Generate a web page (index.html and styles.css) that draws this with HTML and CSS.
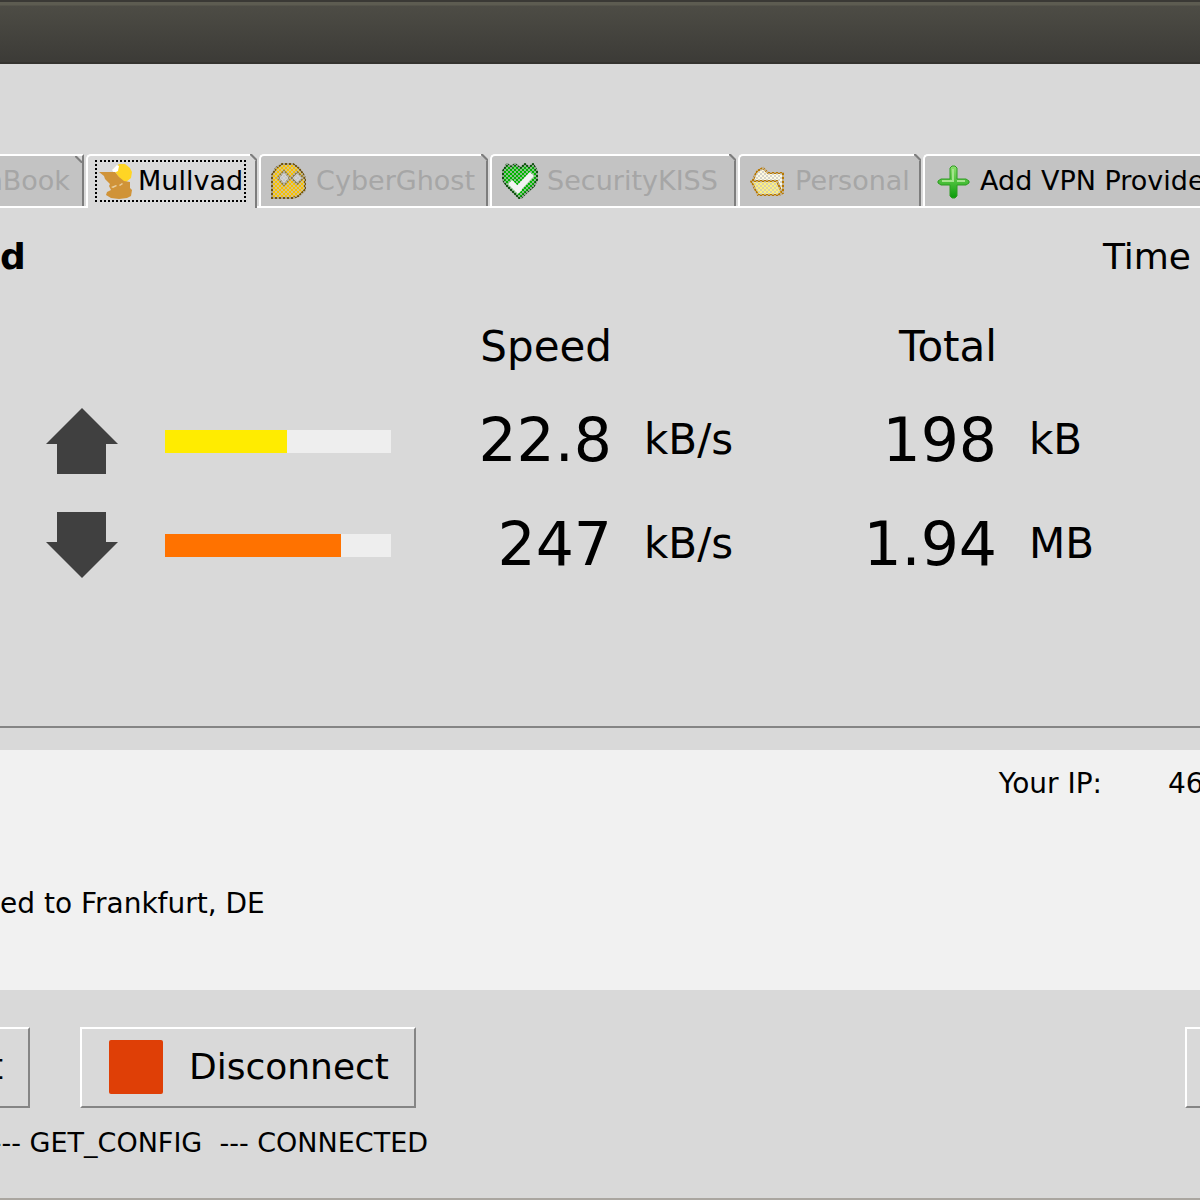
FILE: index.html
```html
<!DOCTYPE html>
<html lang="en">
<head>
<meta charset="utf-8">
<title>VPN Client</title>
<link rel="stylesheet" href="styles.css">
</head>
<body>
<header class="titlebar"></header>
<main class="window">
  <nav class="tabs" role="tablist">
    <button class="tab tab-clipped" role="tab" disabled>nBook</button>
    <button class="tab tab-active" role="tab" aria-selected="true">
      <span class="focus">
        <svg class="icon icon-narrow" viewBox="0 0 34 36" aria-hidden="true">
          <path fill="#ffd524" d="M14 6 20 1l6 0 5 4 2 4-1 6-5 4-5-2-5-7-3-2z"/>
          <path fill="#fff" d="M13 7 18 2l2 1-1 5-4 2z"/>
          <path fill="#d09338" d="M0 9l16 0 4 5 5 4 6 1v6l2 2-1 6-4 2-8 1-8-1-5-3 1-3 4-2-2-4 1-2-5-5-1-3z"/>
          <path fill="#ead0a0" d="M12 24l5-2 1 1-4 2zM20 22l3-2 1 1-3 2z"/>
        </svg>
        Mullvad
      </span>
    </button>
    <button class="tab tab-medium" role="tab" disabled>
      <svg class="icon" viewBox="0 0 36 36" aria-hidden="true">
        <defs>
          <pattern id="dots" width="4" height="4" patternUnits="userSpaceOnUse">
            <path fill="#c3c3c3" fill-opacity=".7" d="M0 0h2v2H0zM2 2h2v2H2z"/>
          </pattern>
        </defs>
        <path fill="#f8c000" stroke="#705410" stroke-width="2" d="M1 35V12L5 5l6-4h11l6 4 4 6 2 4v12l-6 6-6 2z"/>
        <path fill="#d4d4d4" stroke="#8c7a40" stroke-width="2" d="M7 15l6-7 6 7-6 7zM20 15l6-6 6 6-6 6z"/>
        <path fill="url(#dots)" d="M0 0h36v36H0z"/>
      </svg>
      CyberGhost
    </button>
    <button class="tab tab-wide" role="tab" disabled>
      <svg class="icon" viewBox="0 0 36 36" aria-hidden="true">
        <path fill="#00b400" stroke="#105010" stroke-width="2" d="M1 8 5 1l4 3 4-3 5 4 5-4 4 3 4-3 4 7v9l-3 6-8 7-6 6-6-6-7-7-4-6z"/>
        <path fill="url(#dots)" d="M0 0h36v36H0z"/>
        <path fill="none" stroke="#f2f2f2" stroke-width="6" d="M8 19l10 10M14 28 30 11"/>
      </svg>
      SecurityKISS
    </button>
    <button class="tab tab-small" role="tab" disabled>
      <svg class="icon" viewBox="0 0 36 36" aria-hidden="true">
        <path fill="#fffbe0" stroke="#b87800" stroke-width="2" d="M3 17 7 8l6-3 5 5h15v20l-4 2H9z"/>
        <path fill="#fff080" stroke="#b87800" stroke-width="2" d="M1 18h26l5 12-4 2H8z"/>
        <path fill="url(#dots)" d="M0 0h36v36H0z"/>
      </svg>
      Personal
    </button>
    <button class="tab tab-add" role="tab">
      <svg class="icon" viewBox="0 0 36 36" aria-hidden="true">
        <defs>
          <linearGradient id="plus" x1="0" y1="0" x2="0" y2="1">
            <stop offset="0" stop-color="#8fe070"/>
            <stop offset=".5" stop-color="#4bc03a"/>
            <stop offset="1" stop-color="#0a9a0a"/>
          </linearGradient>
        </defs>
        <path fill="url(#plus)" stroke="#2f9c22" stroke-width="1" stroke-linejoin="round" d="M17 3h3l2 2v11h9l3 2v2l-3 2h-9v11l-2 2h-3l-2-2V22H6l-3-2v-2l3-2h9V5z"/>
        <path fill="none" stroke="#a5e48d" stroke-width="2" d="M18 6v12H7M22 18h8"/>
      </svg>
      Add VPN Provider
    </button>
  </nav>

  <section class="panel">
    <div class="panel-head">
      <strong>d</strong>
      <span class="time">Time</span>
    </div>
    <table class="stats">
      <colgroup>
        <col class="col-arrow"><col class="col-bar"><col class="col-speed"><col class="col-unit"><col class="col-total"><col>
      </colgroup>
      <thead>
        <tr><td></td><td></td><th scope="col">Speed</th><td></td><th scope="col">Total</th><td></td></tr>
      </thead>
      <tbody>
        <tr>
          <td class="arrow"><svg viewBox="0 0 72 66" aria-label="Upload"><path d="M36 0 72 36H60v30H11V36H0z"/></svg></td>
          <td><div class="bar"><div class="fill fill-up" style="width:54%"></div></div></td>
          <td class="value">22.8</td><td class="unit">kB/s</td>
          <td class="value">198</td><td class="unit">kB</td>
        </tr>
        <tr>
          <td class="arrow"><svg viewBox="0 0 72 66" aria-label="Download"><path d="M36 66 72 30H60V0H11v30H0z"/></svg></td>
          <td><div class="bar"><div class="fill fill-down" style="width:78%"></div></div></td>
          <td class="value">247</td><td class="unit">kB/s</td>
          <td class="value">1.94</td><td class="unit">MB</td>
        </tr>
      </tbody>
    </table>
  </section>

  <section class="info">
    <div class="ip"><span>Your IP:</span><span class="ip-value">46</span></div>
    <p class="status">ed to Frankfurt, DE</p>
  </section>

  <footer class="footer">
    <div class="actions">
      <button class="action action-left">t</button>
      <button class="action"><span class="stop"></span>Disconnect</button>
      <button class="action action-right" aria-label="More"></button>
    </div>
    <p class="log">--- GET_CONFIG&nbsp; --- CONNECTED</p>
  </footer>
</main>
</body>
</html>
```
FILE: styles.css
```css
* {
  box-sizing: border-box;
}

body {
  margin: 0;
  overflow-x: hidden;
  background: #d9d9d9;
  color: #000;
  font: 27px/32px "DejaVu Sans", sans-serif;
}

button {
  margin: 0;
  font: inherit;
  color: inherit;
}

p {
  margin: 0;
}

.titlebar {
  height: 64px;
  border-top: 2px solid #3a3935;
  border-bottom: 2px solid #34332f;
  background: linear-gradient(#5d5c51 0, #5d5c51 3px, #4d4c45 4px, #3c3b37 100%);
}

.window {
  padding-top: 90px;
  border-bottom: 2px solid #aaa6a0;
}

/* Tabs */
.tabs {
  display: flex;
  gap: 2px;
  height: 54px;
  overflow: hidden;
  white-space: nowrap;
  background: linear-gradient(#fff, #fff) bottom / 100% 2px no-repeat;
}

.tab {
  position: relative;
  display: flex;
  flex: none;
  align-items: center;
  gap: 9px;
  height: 52px;
  padding: 0 12px 0 10px;
  border: 2px solid #fff;
  border-right-color: #7d7d7d;
  border-bottom: 0;
  border-radius: 5px 0 0 0;
  background: #c3c3c3;
}

.tab::after {
  content: "";
  position: absolute;
  top: -2px;
  right: -2px;
  width: 7px;
  height: 7px;
  background: linear-gradient(45deg, #c3c3c3 40%, #7d7d7d 45%, #7d7d7d 62%, #d9d9d9 66%);
}

.tab:disabled {
  color: #a6a6a6;
}

.tab-small { width: 183px; }
.tab-medium { width: 229px; }
.tab-wide { width: 246px; }

.tab-clipped {
  justify-content: flex-end;
  width: 84px;
  overflow: hidden;
  border-left: 0;
  border-radius: 0;
}

.tab-clipped::after {
  top: 0;
  right: 0;
}

.tab-active {
  height: 54px;
  padding: 0 9px 2px 7px;
  background: #d9d9d9;
}

.tab-active::after {
  background: linear-gradient(45deg, #d9d9d9 40%, #7d7d7d 45%, #7d7d7d 62%, #d9d9d9 66%);
}

.focus {
  display: flex;
  align-items: center;
  gap: 5px;
  height: 42px;
  padding: 0 1px 0 2px;
  border: 2px dotted #000;
}

.icon {
  flex: none;
  width: 36px;
  height: 36px;
}

.icon-narrow {
  width: 34px;
}

/* Connection panel */
.panel {
  padding-bottom: 129px;
  border-bottom: 2px solid #858585;
}

.panel-head {
  display: flex;
  align-items: center;
  justify-content: space-between;
  height: 97px;
  padding-right: 9px;
  font-size: 36px;
}

.stats {
  width: 100%;
  table-layout: fixed;
  border-collapse: collapse;
  font-size: 42px;
  line-height: 50px;
}

.stats th,
.stats td {
  padding: 0;
  font-weight: normal;
  text-align: right;
  vertical-align: middle;
}

.stats thead tr {
  height: 84px;
}

.stats tbody tr {
  height: 104px;
}

.col-arrow { width: 165px; }
.col-bar { width: 226px; }
.col-speed { width: 221px; }
.col-unit { width: 200px; }
.col-total { width: 185px; }

.stats .arrow {
  padding-left: 46px;
  text-align: left;
}

.arrow svg {
  display: block;
  width: 72px;
  height: 66px;
  fill: #404040;
}

.bar {
  height: 23px;
  background: #eee;
}

.fill {
  height: 100%;
}

.fill-up { background: #ffec00; }
.fill-down { background: #ff7200; }

.stats .value {
  padding-bottom: 2px;
  font-size: 60px;
}

.stats .unit {
  padding: 0 0 2px 32px;
  text-align: left;
}

/* Address and status */
.info {
  margin-top: 22px;
  background: #f1f1f1;
  font-size: 28px;
}

.ip {
  display: flex;
  align-items: center;
  justify-content: flex-end;
  gap: 66px;
  height: 68px;
}

.ip-value {
  width: 32px;
}

.status {
  padding: 70px 0;
}

/* Footer */
.footer {
  padding-top: 37px;
}

.actions {
  display: flex;
  gap: 50px;
  height: 81px;
}

.action {
  display: flex;
  align-items: center;
  gap: 26px;
  padding: 0 25px 2px 27px;
  border: 2px solid #fff;
  border-right-color: #858585;
  border-bottom-color: #858585;
  background: #d9d9d9;
  font-size: 36px;
}

.action-left {
  justify-content: flex-end;
  width: 30px;
  padding-left: 0;
  overflow: hidden;
  border-left: 0;
}

.action-right {
  width: 15px;
  margin-left: auto;
  padding: 0;
  border-right: 0;
}

.stop {
  width: 54px;
  height: 54px;
  border-radius: 2px;
  background: #df3f06;
}

.log {
  display: flex;
  justify-content: flex-end;
  width: 428px;
  padding: 19px 0 39px;
  white-space: nowrap;
}
```
